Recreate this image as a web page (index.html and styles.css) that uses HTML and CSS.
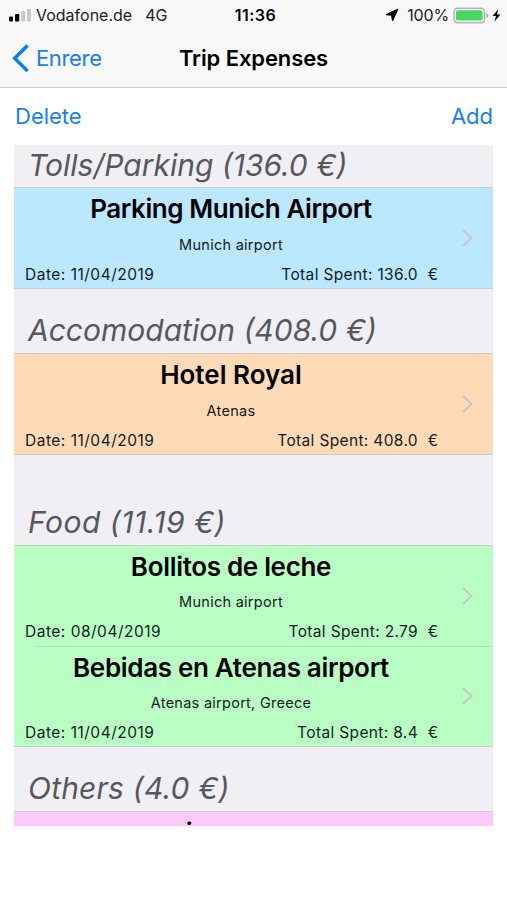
FILE: index.html
```html
<!DOCTYPE html>
<html lang="en">
<head>
<meta charset="utf-8">
<title>Trip Expenses</title>
<link rel="stylesheet" href="styles.css">
</head>
<body>
<header class="top">
  <div class="status">
    <div class="carrier">
      <svg width="24" height="14" viewBox="0 0 24 14"><rect x="1" y="8.500" width="4" height="5" rx="1"/><rect x="7" y="6" width="4.3" height="7.500" rx="1"/><g fill="#c7c7c9"><rect x="13.2" y="3" width="4" height="10.500" rx="1"/><rect x="19" y="1" width="4" height="12.500" rx="1"/></g></svg>
      <span class="operator">Vodafone.de</span><span class="network">4G</span>
    </div>
    <span class="clock">11:36</span>
    <div class="power">
      <svg width="14" height="14" viewBox="0 0 14 14"><path d="M13 1 1 6.7 6.5 7.2 7.5 13Z" stroke="#000" stroke-linejoin="round"/></svg>
      <span class="percent">100%</span>
      <svg class="battery" width="48" height="17" viewBox="0 0 48 17"><rect x="1" y="1.2" width="30.6" height="14.4" rx="3.5" fill="#fff" stroke="#b8b5b9" stroke-width="1.6"/><rect x="3" y="3.2" width="26.6" height="10.4" rx="1.5" fill="#4bd763"/><path d="M33.5 6v5q2-1 2-2.500T33.500 6Z" fill="#aaa"/><path d="M45 2.500 39.500 9H43L41.500 14.500 47.500 7.500H44Z"/></svg>
    </div>
  </div>
  <nav class="nav">
    <a class="back"><svg width="18" height="29" viewBox="0 0 18 29"><path d="M15.500 1.500 2.700 14.300 15.500 27" fill="none" stroke="#087bfb" stroke-width="3.400"/></svg><span>Enrere</span></a>
    <h1>Trip Expenses</h1>
  </nav>
</header>
<div class="actions"><a class="delete">Delete</a><a class="add">Add</a></div>
<main class="list">
  <h2 class="section first"><span class="s1">Tolls/Parking (136.0 €)</span></h2>
  <article class="row blue">
    <h3 class="t1">Parking Munich Airport</h3><p class="place">Munich airport</p>
    <div class="meta"><span class="date">Date: 11/04/2019</span><span class="total">Total Spent: 136.0</span><span class="euro">€</span></div>
    <svg class="chevron" width="12" height="18" viewBox="0 0 12 18"><path d="m1 1 8.500 8L1 17"/></svg>
  </article>
  <h2 class="section"><span class="s2">Accomodation (408.0 €)</span></h2>
  <article class="row orange">
    <h3 class="t2">Hotel Royal</h3><p class="place">Atenas</p>
    <div class="meta"><span class="date">Date: 11/04/2019</span><span class="total">Total Spent: 408.0</span><span class="euro">€</span></div>
    <svg class="chevron" width="12" height="18" viewBox="0 0 12 18"><path d="m1 1 8.500 8L1 17"/></svg>
  </article>
  <h2 class="section tall"><span class="s3">Food (11.19 €)</span></h2>
  <article class="row green divided">
    <h3 class="t3">Bollitos de leche</h3><p class="place">Munich airport</p>
    <div class="meta"><span class="date">Date: 08/04/2019</span><span class="total">Total Spent: 2.79</span><span class="euro">€</span></div>
    <svg class="chevron" width="12" height="18" viewBox="0 0 12 18"><path d="m1 1 8.500 8L1 17"/></svg>
  </article>
  <article class="row green last">
    <h3 class="t4">Bebidas en Atenas airport</h3><p class="place">Atenas airport, Greece</p>
    <div class="meta"><span class="date">Date: 11/04/2019</span><span class="total">Total Spent: 8.4</span><span class="euro">€</span></div>
    <svg class="chevron" width="12" height="18" viewBox="0 0 12 18"><path d="m1 1 8.500 8L1 17"/></svg>
  </article>
  <h2 class="section"><span class="s4">Others (4.0 €)</span></h2>
  <article class="row pink"><h3>imanes</h3></article>
</main>
</body>
</html>
```
FILE: styles.css
```css
* { box-sizing: border-box; }
body { margin: 0; height: 900px; background: #fff; color: #000; font-family: Inter, "Liberation Sans", sans-serif; overflow: hidden; }
h1, h2, h3, p { margin: 0; }
span, a, h1, h2, h3, p { white-space: nowrap; }
.top { height: 88px; background: #f8f8f8; border-bottom: 1px solid #cdcdcf; }
.status { height: 30px; display: grid; grid-template-columns: 1fr auto 1fr; align-items: center; padding: 0 6px 0 8px; font-size: 16px; color: #222; }
.carrier { display: flex; align-items: center; }
.operator { margin-left: 4px; }
.network { margin-left: 13px; }
.clock { color: #000; font-weight: 600; font-size: 16px; letter-spacing: .5px; padding-left: 2px; }
.power { display: flex; align-items: center; justify-content: flex-end; }
.percent { margin: 0 4px 0 8px; letter-spacing: -.15px; }
.nav { height: 56px; display: grid; grid-template-columns: 1fr auto 1fr; align-items: center; padding: 0 12px; }
.back { display: flex; align-items: center; gap: 6px; color: #197ef5; font-size: 22px; letter-spacing: -.35px; }
h1 { font-size: 22px; font-weight: 600; letter-spacing: -.1px; }
.actions { height: 57px; display: flex; justify-content: space-between; align-items: center; padding: 0 14px 2px 15px; color: #197ef5; font-size: 22px; }
.list { margin: 0 14px; height: 681px; overflow: hidden; background: #efeff4; }
.section { height: 64px; display: flex; align-items: flex-end; padding: 0 0 3px 14px; background: #efeff4; font-size: 30px; line-height: 40px; font-weight: 400; font-style: italic; color: #58585b; }
.section.first { height: 42px; padding-bottom: 2px; }
.section.tall { height: 90px; }
.s3 { letter-spacing: .5px; }
.s4 { letter-spacing: .2px; }
.row { height: 102px; padding: 5px 45px 0 0; border: solid #cbcdd0; border-width: 1px 0; position: relative; }
.blue { background: #bbe7ff; }
.orange { background: #ffdab6; }
.green { background: #b9ffc3; }
.pink { background: #fccafa; }
.divided { height: 101px; border-bottom: 0; }
.last { height: 101px; border-top: 0; padding-top: 6px; }
.last::before { content: ""; position: absolute; top: 0; left: 21px; right: 0; height: 1px; background: #b6ddb9; }
h3 { font-size: 26px; line-height: 32px; font-weight: 600; text-align: center; }
.t1 { letter-spacing: -.43px; }
.t3, .t4 { letter-spacing: -.32px; }
.place { margin-top: 10px; font-size: 14.500px; line-height: 20px; letter-spacing: .27px; text-align: center; color: #111c22; }
.green .place { margin-top: 9px; }
.meta { margin-top: 9px; display: flex; font-size: 15.500px; line-height: 22px; color: #111c22; padding: 0 10px 0 11px; }
.date { letter-spacing: .5px; }
.total { margin-left: auto; letter-spacing: .35px; }
.euro { width: 20px; text-align: right; }
.chevron { position: absolute; right: 19px; top: 41px; fill: none; stroke: #c7c7cc; stroke-width: 2; }
```
